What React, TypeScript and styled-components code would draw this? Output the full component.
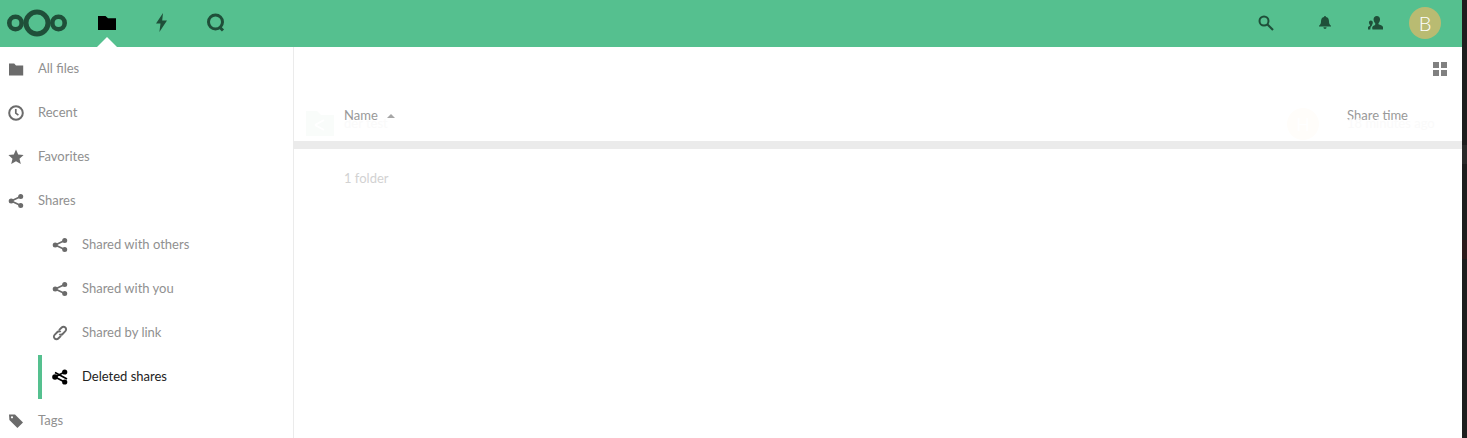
import { ReactNode } from "react";
import styled, { createGlobalStyle } from "styled-components";

const GlobalStyle = createGlobalStyle`
    html, body {
        margin: 0;
        padding: 0;
        height: 100%;
        overflow: hidden;
        background: linear-gradient(
            #1e1e1e 145px,
            #2a2a2a 145px,
            #2a2a2a 164px,
            #1e1e1e 164px,
            #1e1e1e 240px,
            #2d1c1c 240px,
            #2d1c1c 259px,
            #1e1e1e 259px
        );
    }
    #root {
        height: 100%;
    }
`;

const Page = styled.div`
    width: 1462px;
    height: 438px;
    background: #fff;
    font-family: "Lato", "Open Sans", sans-serif;
    font-size: 13px;
    color: #808080;
    overflow: hidden;
    display: flex;
    flex-direction: column;
`;

const Header = styled.header`
    height: 47px;
    flex: none;
    background: #55c08f;
    display: flex;
    align-items: center;
    color: #1f4f39;
`;

const Logo = styled.svg`
    width: 62px;
    height: 30px;
    margin: 0 0 2px 6px;
    flex: none;
`;

const AppNav = styled.nav`
    display: flex;
    margin-left: 12px;
`;

const AppLink = styled.a<{ $active?: boolean }>`
    width: 54px;
    height: 47px;
    box-sizing: border-box;
    padding-bottom: 2px;
    display: flex;
    align-items: center;
    justify-content: center;
    position: relative;
    color: ${(props) => (props.$active ? "#000" : "#1f4f39")};
    &::after {
        content: "";
        display: ${(props) => (props.$active ? "block" : "none")};
        position: absolute;
        left: 17px;
        bottom: 0;
        border: 10px solid transparent;
        border-top: 0;
        border-bottom-color: #fff;
    }
`;

const HeaderRight = styled.div`
    margin-left: auto;
    display: flex;
    align-items: center;
    padding-right: 21px;
`;

const HeaderButton = styled.a<{ $width?: number }>`
    width: ${(props) => props.$width || 54}px;
    height: 47px;
    box-sizing: border-box;
    padding-bottom: 2px;
    display: flex;
    align-items: center;
    justify-content: center;
`;

const Avatar = styled.div`
    width: 32px;
    height: 32px;
    margin: 0 0 2px 7px;
    border-radius: 50%;
    background: #b9bb72;
    color: #fff;
    font-size: 20px;
    font-weight: 300;
    display: flex;
    align-items: center;
    justify-content: center;
`;

const Body = styled.div`
    flex: 1;
    display: flex;
    min-height: 0;
`;

const Sidebar = styled.aside`
    width: 293px;
    flex: none;
    border-right: 1px solid #ebebeb;
    display: flex;
    flex-direction: column;
`;

const NavItem = styled.a<{ $nested?: boolean; $active?: boolean }>`
    height: 44px;
    flex: none;
    display: flex;
    align-items: center;
    box-sizing: border-box;
    margin-left: ${(props) => (props.$nested ? "38px" : "0")};
    padding-left: ${(props) => (props.$nested ? "10px" : "0")};
    border-left: ${(props) =>
        props.$nested ? `4px solid ${props.$active ? "#55c08f" : "transparent"}` : "none"};
    color: ${(props) => (props.$active ? "#222" : "#909090")};
`;

const NavLabel = styled.span`
    margin-bottom: 2px;
`;

const NavIcon = styled.span<{ $active?: boolean }>`
    width: 32px;
    margin-right: 6px;
    flex: none;
    display: flex;
    align-items: center;
    justify-content: center;
    color: ${(props) => (props.$active ? "#000" : "#6b6b6b")};
`;

const NestedIcon = styled(NavIcon)`
    width: 16px;
    margin-right: 14px;
`;

const Content = styled.main`
    flex: 1;
    position: relative;
    min-width: 0;
`;

const Toolbar = styled.div`
    height: 44px;
    display: flex;
    align-items: center;
    justify-content: flex-end;
    padding-right: 15px;
`;

const ViewToggle = styled.svg`
    width: 14px;
    height: 14px;
    color: #808080;
`;

const TableHead = styled.div`
    height: 58px;
    box-sizing: border-box;
    border-bottom: 8px solid #ebebeb;
    display: flex;
    align-items: flex-start;
    padding: 14px 54px 0 50px;
    color: #999;
    line-height: 20px;
`;

const SortArrow = styled.span`
    display: inline-block;
    margin-left: 9px;
    margin-bottom: 1px;
    vertical-align: middle;
    border: 4.5px solid transparent;
    border-top: 0;
    border-bottom: 4px solid #a6a6a6;
`;

const ShareTime = styled.span`
    margin-left: auto;
`;

const Summary = styled.div`
    padding: 19px 0 0 50px;
    color: #d2d2d2;
    line-height: 20px;
`;

const GhostIcon = styled.svg`
    position: absolute;
    left: 12px;
    top: 61px;
    width: 28px;
    height: 28px;
`;

const GhostName = styled.span`
    position: absolute;
    left: 50px;
    top: 68px;
    color: #fafafa;
`;

const GhostAvatar = styled.div`
    position: absolute;
    left: 993px;
    top: 61px;
    width: 32px;
    height: 32px;
    border-radius: 50%;
    background: #fffdfa;
    color: #fff;
    font-size: 18px;
    display: flex;
    align-items: center;
    justify-content: center;
`;

const GhostDate = styled.span`
    position: absolute;
    left: 1053px;
    top: 68px;
    color: #fafafa;
`;

const FolderIcon = ({ size = 16 }: { size?: number }) => (
    <svg width={size} height={size} viewBox="0 0 16 16" fill="currentColor">
        <path d="M1 2.500h5.200L8 4.500h7.200v10H1z" />
    </svg>
);

const ShareIcon = () => (
    <svg width="16" height="16" viewBox="0 0 16 16" fill="currentColor">
        <circle cx="12.7" cy="3.4" r="2.5" />
        <circle cx="3.2" cy="8" r="2.5" />
        <circle cx="12.7" cy="12.6" r="2.5" />
        <path d="M3.2 8l9.500-4.600M3.2 8l9.500 4.600" stroke="currentColor" strokeWidth="1.7" fill="none" />
    </svg>
);

const DeletedShareIcon = () => (
    <svg width="16" height="16" viewBox="0 0 16 16" fill="currentColor">
        <circle cx="12.7" cy="3" r="2.6" />
        <circle cx="3" cy="8" r="2.8" />
        <circle cx="12.7" cy="13" r="2.6" />
        <path d="M3 8l9.700-5M3 8l9.700 5M3 3.500l12 6.500" stroke="currentColor" strokeWidth="1.8" fill="none" />
    </svg>
);

const LinkIcon = () => (
    <svg width="16" height="16" viewBox="0 0 16 16" fill="none" stroke="currentColor" strokeWidth="1.9">
        <path d="M7 5.200L9.700 2.500a2.400 2.400 0 0 1 3.600 0 2.500 2.500 0 0 1 .1 3.600L10.600 9a2.400 2.400 0 0 1-3.300.1" />
        <path d="M9 10.800l-2.700 2.700a2.400 2.400 0 0 1-3.600 0 2.500 2.500 0 0 1-.1-3.600L5.400 7a2.400 2.400 0 0 1 3.300-.1" />
    </svg>
);

const ClockIcon = () => (
    <svg width="16" height="16" viewBox="0 0 16 16" fill="none" stroke="currentColor" strokeWidth="2">
        <circle cx="8" cy="8" r="6.800" />
        <path d="M7.800 4v4.200l2.600 2" strokeWidth="1.7" />
    </svg>
);

const StarIcon = () => (
    <svg width="16" height="16" viewBox="0 0 16 16" fill="currentColor">
        <path d="M8 .6l2.200 5 5.400.5-4.100 3.600 1.300 5.400L8 12.200l-4.800 2.900 1.300-5.400L.4 6.100l5.400-.5z" />
    </svg>
);

const TagIcon = () => (
    <svg width="16" height="16" viewBox="0 0 16 16" fill="currentColor">
        <path d="M1 1.500h6l8 8-5.600 5.600-8-8zM4 3.200a1.100 1.100 0 1 0 0 2.200 1.100 1.100 0 0 0 0-2.200z" fillRule="evenodd" />
    </svg>
);

const NAV_ICON: Record<string, ReactNode> = {
    "All files": <FolderIcon />,
    Recent: <ClockIcon />,
    Favorites: <StarIcon />,
    Shares: <ShareIcon />,
    Tags: <TagIcon />,
};

function App() {
    return (
        <Page>
            <GlobalStyle />
            <Header>
                <Logo viewBox="0 0 62 30" fill="none" stroke="currentColor">
                    <circle cx="31" cy="15" r="11" strokeWidth="5" />
                    <circle cx="9.500" cy="15" r="6.200" strokeWidth="4.600" />
                    <circle cx="52.500" cy="15" r="6.200" strokeWidth="4.600" />
                </Logo>
                <AppNav>
                    <AppLink $active>
                        <svg width="18" height="16" viewBox="0 0 18 16" fill="currentColor">
                            <path d="M0 1h7.500L10 3.200h8V15H0z" />
                        </svg>
                    </AppLink>
                    <AppLink>
                        <svg width="13" height="19" viewBox="0 0 13 19" fill="currentColor">
                            <path d="M8 0L1 10.500h4.500L4.400 19l7.600-11.500H7.200z" />
                        </svg>
                    </AppLink>
                    <AppLink>
                        <svg width="19" height="19" viewBox="0 0 19 19" fill="none" stroke="currentColor" strokeWidth="3">
                            <circle cx="9.500" cy="9" r="7" />
                            <path d="M13.500 14l3.500 3.500" />
                        </svg>
                    </AppLink>
                </AppNav>
                <HeaderRight>
                    <HeaderButton>
                        <svg width="16" height="16" viewBox="0 0 16 16" fill="none" stroke="currentColor">
                            <circle cx="6" cy="6" r="4.500" strokeWidth="2" />
                            <path d="M9.500 9.500l5.500 5.500" strokeWidth="2.200" />
                        </svg>
                    </HeaderButton>
                    <HeaderButton $width={55}>
                        <svg width="12" height="13" viewBox="0 0 12 13" fill="currentColor" transform="translate(4 0)">
                            <path d="M6 0a1 1 0 0 1 1 1.100C9.200 1.600 10 3.400 10 5.500c0 2.200.7 3.300 2 4.300v.7H0v-.7c1.300-1 2-2.100 2-4.300C2 3.400 2.800 1.600 5 1.100A1 1 0 0 1 6 0zM4.400 11.300h3.200a1.600 1.600 0 0 1-3.200 0z" />
                        </svg>
                    </HeaderButton>
                    <HeaderButton>
                        <svg width="15" height="14" viewBox="0 0 15 14" fill="currentColor">
                            <path d="M8.800 0a3.200 3.200 0 0 1 3.200 3.500c0 1.500-.6 2.800-1.500 3.600v1.200c1.500.5 4 1.300 4.500 2.600V13.500H4.500c-.5-1.500-.5-2.500.5-3.500 1-.4 1.600-.9 2.200-1.300V7.100C6.200 6.300 5.600 5 5.600 3.500A3.200 3.200 0 0 1 8.800 0zM2.800 4.500a2 2 0 0 1 2 2.200c0 .9-.3 1.700-.9 2.300v.7c-.8.5-1.500 1.200-1.600 3.800H0v-2.300c.3-.7 1.400-1.100 2-1.400V9C1.400 8.400 1 7.600 1 6.700a2 2 0 0 1 1.800-2.200z" />
                        </svg>
                    </HeaderButton>
                    <Avatar>B</Avatar>
                </HeaderRight>
            </Header>
            <Body>
                <Sidebar>
                    {["All files", "Recent", "Favorites", "Shares"].map((name) => (
                        <NavItem key={name}>
                            <NavIcon>{NAV_ICON[name]}</NavIcon>
                            <NavLabel>{name}</NavLabel>
                        </NavItem>
                    ))}
                    <NavItem $nested>
                        <NestedIcon><ShareIcon /></NestedIcon>
                        <NavLabel>Shared with others</NavLabel>
                    </NavItem>
                    <NavItem $nested>
                        <NestedIcon><ShareIcon /></NestedIcon>
                        <NavLabel>Shared with you</NavLabel>
                    </NavItem>
                    <NavItem $nested>
                        <NestedIcon><LinkIcon /></NestedIcon>
                        <NavLabel>Shared by link</NavLabel>
                    </NavItem>
                    <NavItem $nested $active>
                        <NestedIcon $active><DeletedShareIcon /></NestedIcon>
                        <NavLabel>Deleted shares</NavLabel>
                    </NavItem>
                    <NavItem>
                        <NavIcon>{NAV_ICON.Tags}</NavIcon>
                        <NavLabel>Tags</NavLabel>
                    </NavItem>
                </Sidebar>
                <Content>
                    <Toolbar>
                        <ViewToggle viewBox="0 0 14 14" fill="currentColor">
                            <path d="M0 0h6v6H0zM8 0h6v6H8zM0 8h6v6H0zM8 8h6v6H8z" />
                        </ViewToggle>
                    </Toolbar>
                    <TableHead>
                        <span>Name<SortArrow /></span>
                        <ShareTime>Share time</ShareTime>
                    </TableHead>
                    <GhostIcon viewBox="0 0 28 28">
                        <path d="M0 3h11l4 4h13v21H0z" fill="#f9fcfa" />
                        <path d="M9 17l9-5M9 17l9 5" stroke="#fff" strokeWidth="2" fill="none" />
                    </GhostIcon>
                    <GhostName>der test</GhostName>
                    <GhostAvatar>H</GhostAvatar>
                    <GhostDate>18 minutes ago</GhostDate>
                    <Summary>1 folder</Summary>
                </Content>
            </Body>
        </Page>
    );
}

export default App;
